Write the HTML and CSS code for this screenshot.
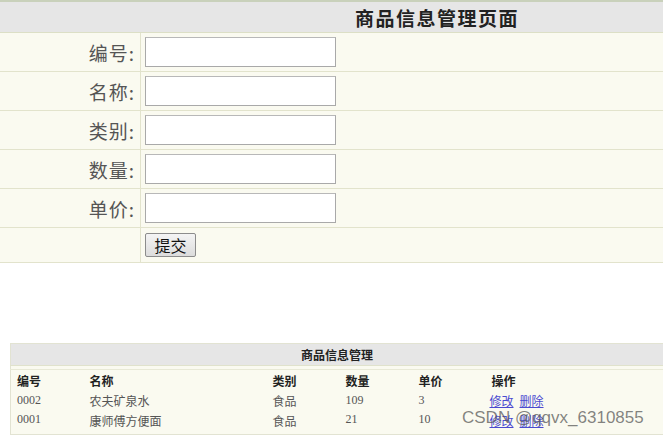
FILE: index.html
```html
<!DOCTYPE html>
<html lang="zh-CN">
<head>
<meta charset="utf-8">
<title>商品信息管理页面</title>
<link rel="stylesheet" href="styles.css">
</head>
<body>
<table class="form-table">
  <tr><th class="title" colspan="2">商品信息管理页面</th></tr>
  <tr><td class="label">编号:</td><td class="field"><input class="text-input" type="text"></td></tr>
  <tr><td class="label">名称:</td><td class="field"><input class="text-input" type="text"></td></tr>
  <tr><td class="label">类别:</td><td class="field"><input class="text-input" type="text"></td></tr>
  <tr><td class="label">数量:</td><td class="field"><input class="text-input" type="text"></td></tr>
  <tr><td class="label">单价:</td><td class="field"><input class="text-input" type="text"></td></tr>
  <tr class="submit-row"><td class="label"></td><td class="field"><button class="submit-btn" type="submit">提交</button></td></tr>
</table>

<div class="list-wrap">
  <table class="list-table">
    <colgroup>
      <col class="c-id"><col class="c-name"><col class="c-cat"><col class="c-qty"><col class="c-price"><col class="c-op">
    </colgroup>
    <tr><th class="list-title" colspan="6">商品信息管理</th></tr>
    <tr class="spacer"><td colspan="6"></td></tr>
    <tr class="head-row"><th>编号</th><th>名称</th><th>类别</th><th>数量</th><th>单价</th><th>操作</th></tr>
    <tr class="data-row"><td>0002</td><td>农夫矿泉水</td><td>食品</td><td>109</td><td>3</td><td class="ops"><a href="#">修改</a><a href="#">删除</a></td></tr>
    <tr class="data-row last"><td>0001</td><td>康师傅方便面</td><td>食品</td><td>21</td><td>10</td><td class="ops"><a href="#">修改</a><a href="#">删除</a></td></tr>
  </table>
  <div class="watermark">CSDN @qqvx_6310855</div>
</div>
</body>
</html>
```
FILE: styles.css
```css
html, body {
  margin: 0;
  padding: 0;
  background: #ffffff;
}
body {
  font-family: "Liberation Serif", "Noto Sans CJK SC", serif;
  color: #333;
}
.form-table {
  width: 100%;
  border-collapse: collapse;
  background: #fafaf0;
  border-top: 2px solid #c9d1bb;
}
.form-table .title {
  height: 30px;
  padding: 0 0 0 355px;
  text-align: left;
  background: #e6e6e6;
  border-bottom: 1px solid #dcdfc6;
  font-family: "Noto Sans CJK SC", sans-serif;
  font-size: 19px;
  font-weight: bold;
  color: #222;
  letter-spacing: 1.5px;
}
.form-table td {
  height: 38px;
  padding: 0;
  border-bottom: 1px solid #e2e3cc;
}
.form-table .label {
  width: 135px;
  padding-right: 5px;
  text-align: right;
  border-right: 1px solid #e2e3cc;
  font-family: "Noto Sans CJK SC", sans-serif;
  font-size: 19px;
  letter-spacing: 1px;
  color: #555;
}
.form-table .field {
  padding-left: 4px;
}
.text-input {
  display: block;
  box-sizing: border-box;
  width: 191px;
  height: 30px;
  margin: 0;
  border: 1px solid #a9a9a9;
  border-top-color: #b8b8b8;
  background: #fff;
}
.submit-row td {
  height: 34px;
}
.submit-btn {
  display: block;
  box-sizing: border-box;
  width: 51px;
  height: 24px;
  padding: 0;
  border: 1px solid #8c8c8c;
  border-radius: 2px;
  background: linear-gradient(#f4f4f4, #dcdcdc);
  font-family: "Noto Sans CJK SC", sans-serif;
  font-size: 16px;
  line-height: 20px;
  color: #111;
}
.list-wrap {
  position: relative;
  margin: 80px 0 0 10px;
}
.list-table {
  width: 654px;
  border-collapse: collapse;
  background: #fafaf0;
  border: 1px solid #e2e3d2;
  font-size: 12px;
}
.c-id { width: 73px; }
.c-name { width: 183px; }
.c-cat, .c-qty, .c-price { width: 73px; }
.list-table .list-title {
  height: 21px;
  padding: 0;
  background: #e6e6e6;
  border-bottom: 1px solid #e0e2cc;
  text-align: center;
  font-family: "Noto Sans CJK SC", sans-serif;
  font-size: 12px;
  font-weight: bold;
  color: #222;
}
.spacer td {
  height: 3px;
  padding: 0;
  border-bottom: 1px solid #e8e9d6;
}
.head-row th {
  height: 21px;
  padding: 0 0 0 6px;
  text-align: left;
  font-family: "Noto Sans CJK SC", sans-serif;
  font-size: 12px;
  font-weight: bold;
  color: #222;
}
.data-row td {
  height: 19px;
  padding: 0 0 0 6px;
  font-family: "Liberation Serif", "Noto Sans CJK SC", serif;
  font-size: 12px;
  color: #555;
}
.data-row td.ops {
  padding-left: 4px;
}
.data-row.last td {
  height: 22px;
  vertical-align: top;
  padding-top: 2px;
}
.data-row a {
  color: #4b4bd0;
  text-decoration: underline;
  margin-right: 6px;
}
.watermark {
  position: absolute;
  left: 452px;
  top: 65px;
  font-family: "Liberation Sans", sans-serif;
  font-size: 17px;
  color: rgba(90, 90, 90, 0.75);
  white-space: nowrap;
  pointer-events: none;
}
```
